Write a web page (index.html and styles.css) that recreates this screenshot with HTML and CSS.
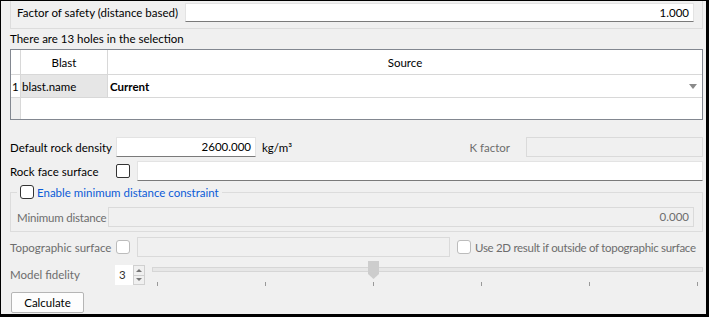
FILE: index.html
```html
<!DOCTYPE html>
<html lang="en">
<head>
    <meta charset="UTF-8">
    <title>Factor of safety</title>
    <link rel="stylesheet" href="styles.css">
</head>
<body>
    <div class="window">
        <div class="top-group">
            <span class="top-label">Factor of safety (distance based)</span>
            <div class="field value">1.000</div>
        </div>

        <div class="caption">There are 13 holes in the selection</div>

        <div class="table">
            <div class="cell num"></div>
            <div class="cell head">Blast</div>
            <div class="cell head last">Source</div>

            <div class="cell num">1</div>
            <div class="cell name">blast.name</div>
            <div class="cell current last">Current <span class="arrow"></span></div>

            <div class="cell num filler"></div>
            <div class="cell empty"></div>
        </div>

        <div class="row density">
            <span class="row-label">Default rock density</span>
            <div class="field value density-field">2600.000</div>
            <span class="unit">kg/m³</span>
            <span class="k-label">K factor</span>
            <div class="field disabled k-field"></div>
        </div>

        <div class="row rock">
            <span class="row-label">Rock face surface</span>
            <span class="check"></span>
            <div class="field wide"></div>
        </div>

        <fieldset class="group">
            <legend><span class="check round"></span>Enable minimum distance constraint</legend>
            <div class="group-row">
                <span class="group-label">Minimum distance</span>
                <div class="field disabled value wide">0.000</div>
            </div>
        </fieldset>

        <div class="row topo">
            <span class="row-label muted">Topographic surface</span>
            <span class="check off"></span>
            <div class="field disabled topo-field"></div>
            <span class="check off round use2d"></span>
            <span class="muted use2d-text">Use 2D result if outside of topographic surface</span>
        </div>

        <div class="fidelity">
            <span class="fid-label muted">Model fidelity</span>
            <div class="spin">
                <span class="spin-value">3</span>
                <span class="spin-arrows">
                    <span class="up"></span>
                    <span class="down"></span>
                </span>
            </div>
            <div class="slider">
                <div class="groove"></div>
                <svg class="handle" width="11" height="18" viewBox="0 0 11 18">
                    <polygon points="0,0 11,0 11,13 5.5,18 0,13" fill="#cdcdcd"/>
                </svg>
                <div class="ticks">
                    <span></span><span></span><span></span><span></span><span></span><span></span>
                </div>
            </div>
        </div>

        <button class="calc">Calculate</button>
    </div>
</body>
</html>
```

FILE: styles.css
```css
* {
    margin: 0;
    padding: 0;
    box-sizing: border-box;
}

body {
    font-family: Lato, "Noto Sans", sans-serif;
    font-size: 11.5px;
    color: #000;
    background: #000;
    white-space: nowrap;
}

.window {
    width: 709px;
    height: 317px;
    background: #f0f0f0;
    border: 1px solid #000;
    border-right-width: 3px;
    border-bottom-width: 3px;
    padding: 0 3px 0 9px;
    display: flex;
    flex-direction: column;
    overflow: hidden;
}

/* inputs */
.field {
    background: #fff;
    border: 1px solid #e3e3e3;
    border-bottom-color: #7a7a7a;
    height: 20px;
    line-height: 18px;
}

.field.value {
    text-align: right;
    padding-right: 4px;
}

.field.disabled {
    background: #f0f0f0;
    border-color: #dadada;
    color: #6d6d6d;
}

.wide {
    flex: 1;
}

.muted {
    color: #6d6d6d;
}

.check {
    width: 14px;
    height: 14px;
    background: #fff;
    border: 1px solid #333;
    border-radius: 2px;
    flex-shrink: 0;
}

.check.round {
    border-radius: 3px;
}

.check.off {
    border-color: #bcbcbc;
    border-radius: 3px;
}

/* top group */
.top-group {
    display: flex;
    align-items: center;
    height: 28px;
    flex-shrink: 0;
    border: 1px solid #dcdcdc;
    border-top: none;
    padding: 2px 8px 6px 6px;
}

.top-label {
    width: 168px;
    flex-shrink: 0;
}

.top-group .field {
    flex: 1;
    height: 19px;
    line-height: 17px;
}

.caption {
    height: 20px;
    line-height: 20px;
    flex-shrink: 0;
}

/* table */
.table {
    display: grid;
    grid-template-columns: 10px 87px 1fr;
    grid-template-rows: 25px 23px 21px;
    height: 71px;
    flex-shrink: 0;
    border: 1px solid #828790;
    background: #fff;
}

.cell {
    display: flex;
    align-items: center;
    border-right: 1px solid #d8d8d8;
    border-bottom: 1px solid #d8d8d8;
}

.cell.last {
    border-right: none;
}

.head {
    justify-content: center;
}

.num {
    padding-left: 1px;
}

.num.filler {
    background: #f0f0f0;
    border-bottom: none;
}

.name {
    background: #e6e6e6;
    padding-left: 1px;
}

.current {
    font-weight: bold;
    padding-left: 2px;
}

.arrow {
    margin-left: auto;
    margin-right: 5px;
    border-top: 5px solid #8a8a8a;
    border-left: 4px solid transparent;
    border-right: 4px solid transparent;
}

.empty {
    grid-column: span 2;
    border: none;
}

/* form rows */
.row {
    display: flex;
    align-items: center;
    height: 20px;
    flex-shrink: 0;
}

.row-label {
    width: 106px;
    flex-shrink: 0;
}

.density {
    margin-top: 17px;
}

.density-field {
    width: 140px;
}

.unit {
    margin-left: 6px;
    flex: 1;
}

.k-label {
    color: #6d6d6d;
    margin-right: 16px;
}

.k-field {
    width: 177px;
}

.rock {
    margin-top: 4px;
}

.rock .check {
    margin-right: 7px;
}

/* group box */
.group {
    margin-top: 3px;
    flex-shrink: 0;
    border: 1px solid #dcdcdc;
    padding: 7px 8px 4px 6px;
}

.group legend {
    display: flex;
    align-items: center;
    height: 16px;
    padding: 0 3px;
    color: #0b5bd7;
}

.group legend .check {
    margin-right: 3px;
}

.group-row {
    display: flex;
    align-items: center;
}

.group-label {
    width: 91px;
    flex-shrink: 0;
    color: #6d6d6d;
    letter-spacing: -0.2px;
}

.topo {
    margin-top: 5px;
}

.topo-field {
    width: 313px;
    flex-shrink: 0;
    margin-left: 7px;
}

.use2d {
    margin: 0 4px 0 7px;
}

.use2d-text {
    letter-spacing: -0.3px;
}

/* fidelity */
.fidelity {
    display: flex;
    align-items: flex-start;
    height: 26px;
    flex-shrink: 0;
    margin-top: 4px;
}

.fid-label {
    width: 105px;
    flex-shrink: 0;
    line-height: 20px;
    margin-top: 4px;
}

.spin {
    display: flex;
    height: 20px;
    margin-top: 4px;
}

.spin-value {
    width: 18px;
    background: #fff;
    line-height: 20px;
    padding-left: 4px;
    color: #333;
}

.spin-arrows {
    display: flex;
    flex-direction: column;
    width: 12px;
    border: 1px solid #d0d0d0;
}

.spin-arrows span {
    flex: 1;
    display: flex;
    align-items: center;
    justify-content: center;
}

.spin-arrows .up {
    border-bottom: 1px solid #d0d0d0;
}

.spin-arrows .up::after {
    content: "";
    border-bottom: 3px solid #777;
    border-left: 3px solid transparent;
    border-right: 3px solid transparent;
}

.spin-arrows .down::after {
    content: "";
    border-top: 3px solid #777;
    border-left: 3px solid transparent;
    border-right: 3px solid transparent;
}

.slider {
    flex: 1;
    position: relative;
    height: 26px;
    margin-left: 7px;
}

.groove {
    margin-top: 6px;
    height: 5px;
    border: 1px solid #d6d6d6;
    background: #e7e7e7;
}

.handle {
    position: absolute;
    left: 216px;
    top: 0;
}

.ticks {
    display: flex;
    justify-content: space-between;
    padding: 0 5px;
    margin-top: 10px;
}

.ticks span {
    width: 1px;
    height: 4px;
    background: #999;
}

.calc {
    width: 73px;
    height: 21px;
    flex-shrink: 0;
    margin: 5px 0 0 1px;
    font-family: inherit;
    font-size: 11.5px;
    background: #fdfdfd;
    border: 1px solid #b5b5b5;
    border-radius: 2px;
}
```
